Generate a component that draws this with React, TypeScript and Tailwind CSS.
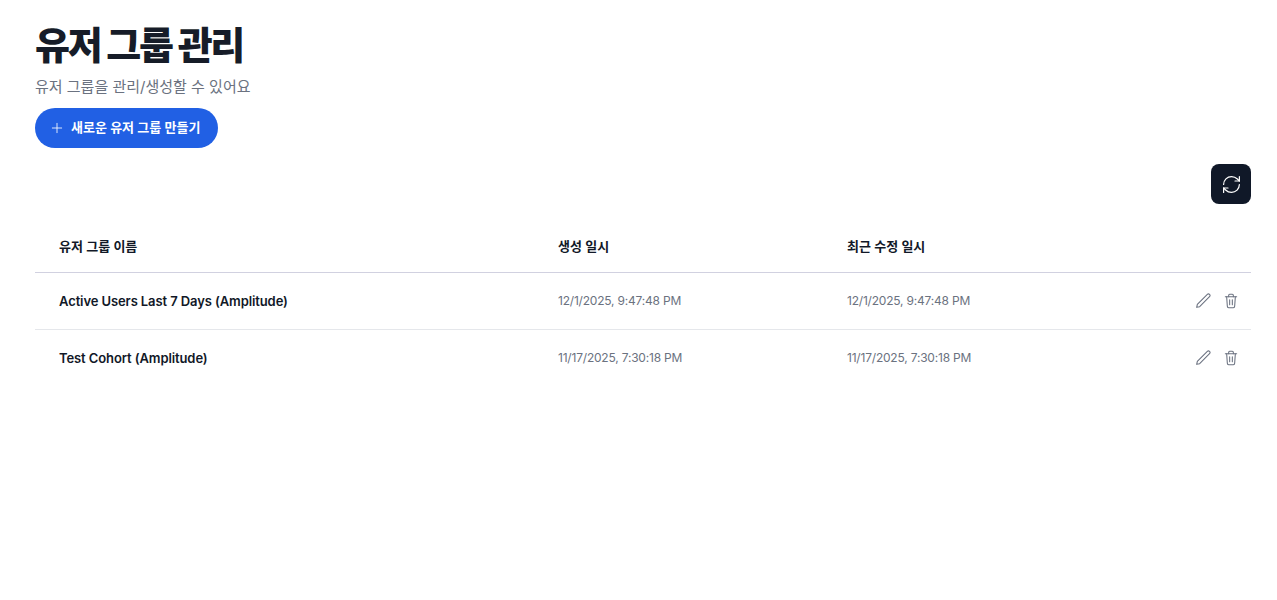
import { Plus, RefreshCw } from "lucide-react"

const rows = [
  { name: "Active Users Last 7 Days (Amplitude)", created: "12/1/2025, 9:47:48 PM", updated: "12/1/2025, 9:47:48 PM" },
  { name: "Test Cohort (Amplitude)", created: "11/17/2025, 7:30:18 PM", updated: "11/17/2025, 7:30:18 PM" },
]

const PencilIcon = () => (
  <svg width="16" height="16" viewBox="0 0 24 24" fill="none" stroke="currentColor" strokeWidth="1.6" strokeLinejoin="round" strokeLinecap="round">
    <path d="M2.5 21.5l1-4.5L18.5 2.2a1.5 1.5 0 0 1 3.3 3.3L7 20.5z" />
  </svg>
)

const TrashIcon = () => (
  <svg width="16" height="16" viewBox="0 0 24 24" fill="none" stroke="currentColor" strokeWidth="1.6" strokeLinejoin="round" strokeLinecap="round">
    <path d="M3.5 5.5h17" />
    <path d="M8.5 5.5V3.5a1.5 1.5 0 0 1 1.5-1.5h4a1.5 1.5 0 0 1 1.5 1.5v2" />
    <path d="M5.5 5.5l1 14.5a2 2 0 0 0 2 2h7a2 2 0 0 0 2-2l1-14.5" />
    <path d="M10 10v7.5M14 10v7.5" />
  </svg>
)

const App = () => {
  return (
    <div className="min-h-[600px] bg-white pl-[35px] pr-[26px] pt-[17px] font-['Inter','Noto_Sans_CJK_KR',sans-serif]">
      <h1 className="text-[38px] leading-[56px] font-extrabold tracking-[-2.3px] text-[#161c28]">유저 그룹 관리</h1>
      <p className="mt-[2px] text-[15px] leading-[24px] text-[#6b7280]">유저 그룹을 관리/생성할 수 있어요</p>
      <button className="mt-[9px] flex h-[40px] items-center gap-[6px] rounded-full bg-[#2160e4] pl-[14px] pr-[18px] text-[13px] font-semibold text-white">
        <Plus strokeWidth={1.25} className="h-[16px] w-[16px]" />
        새로운 유저 그룹 만들기
      </button>
      <div className="mt-[16px] flex justify-end">
        <button className="flex h-[40px] w-[40px] items-center justify-center rounded-lg bg-[#101828] text-white">
          <RefreshCw size={21} strokeWidth={1.4} />
        </button>
      </div>
      <table className="mt-[16px] w-full table-fixed">
        <thead>
          <tr className="h-[52px] border-b border-[#d1d1e0] text-left text-[13px] text-[#111827]">
            <th className="w-[523px] pl-[24px] pt-[2px] font-semibold">유저 그룹 이름</th>
            <th className="w-[289px] pt-[2px] font-semibold">생성 일시</th>
            <th className="pt-[2px] font-semibold">최근 수정 일시</th>
            <th className="w-[100px]"></th>
          </tr>
        </thead>
        <tbody>
          {rows.map((row) => (
            <tr key={row.name} className="h-[57px] border-b border-[#e5e7eb] last:border-b-0">
              <td className="pl-[24px] pt-[2px] text-[13px] font-semibold tracking-[-0.1px] text-[#111827]">{row.name}</td>
              <td className="text-[12px] tracking-[-0.2px] text-[#6b7280]">{row.created}</td>
              <td className="text-[12px] tracking-[-0.2px] text-[#6b7280]">{row.updated}</td>
              <td>
                <div className="flex items-center justify-end gap-[12px] pr-[12px] text-[#6b7280]">
                  <PencilIcon />
                  <TrashIcon />
                </div>
              </td>
            </tr>
          ))}
        </tbody>
      </table>
    </div>
  )
}

export default App
